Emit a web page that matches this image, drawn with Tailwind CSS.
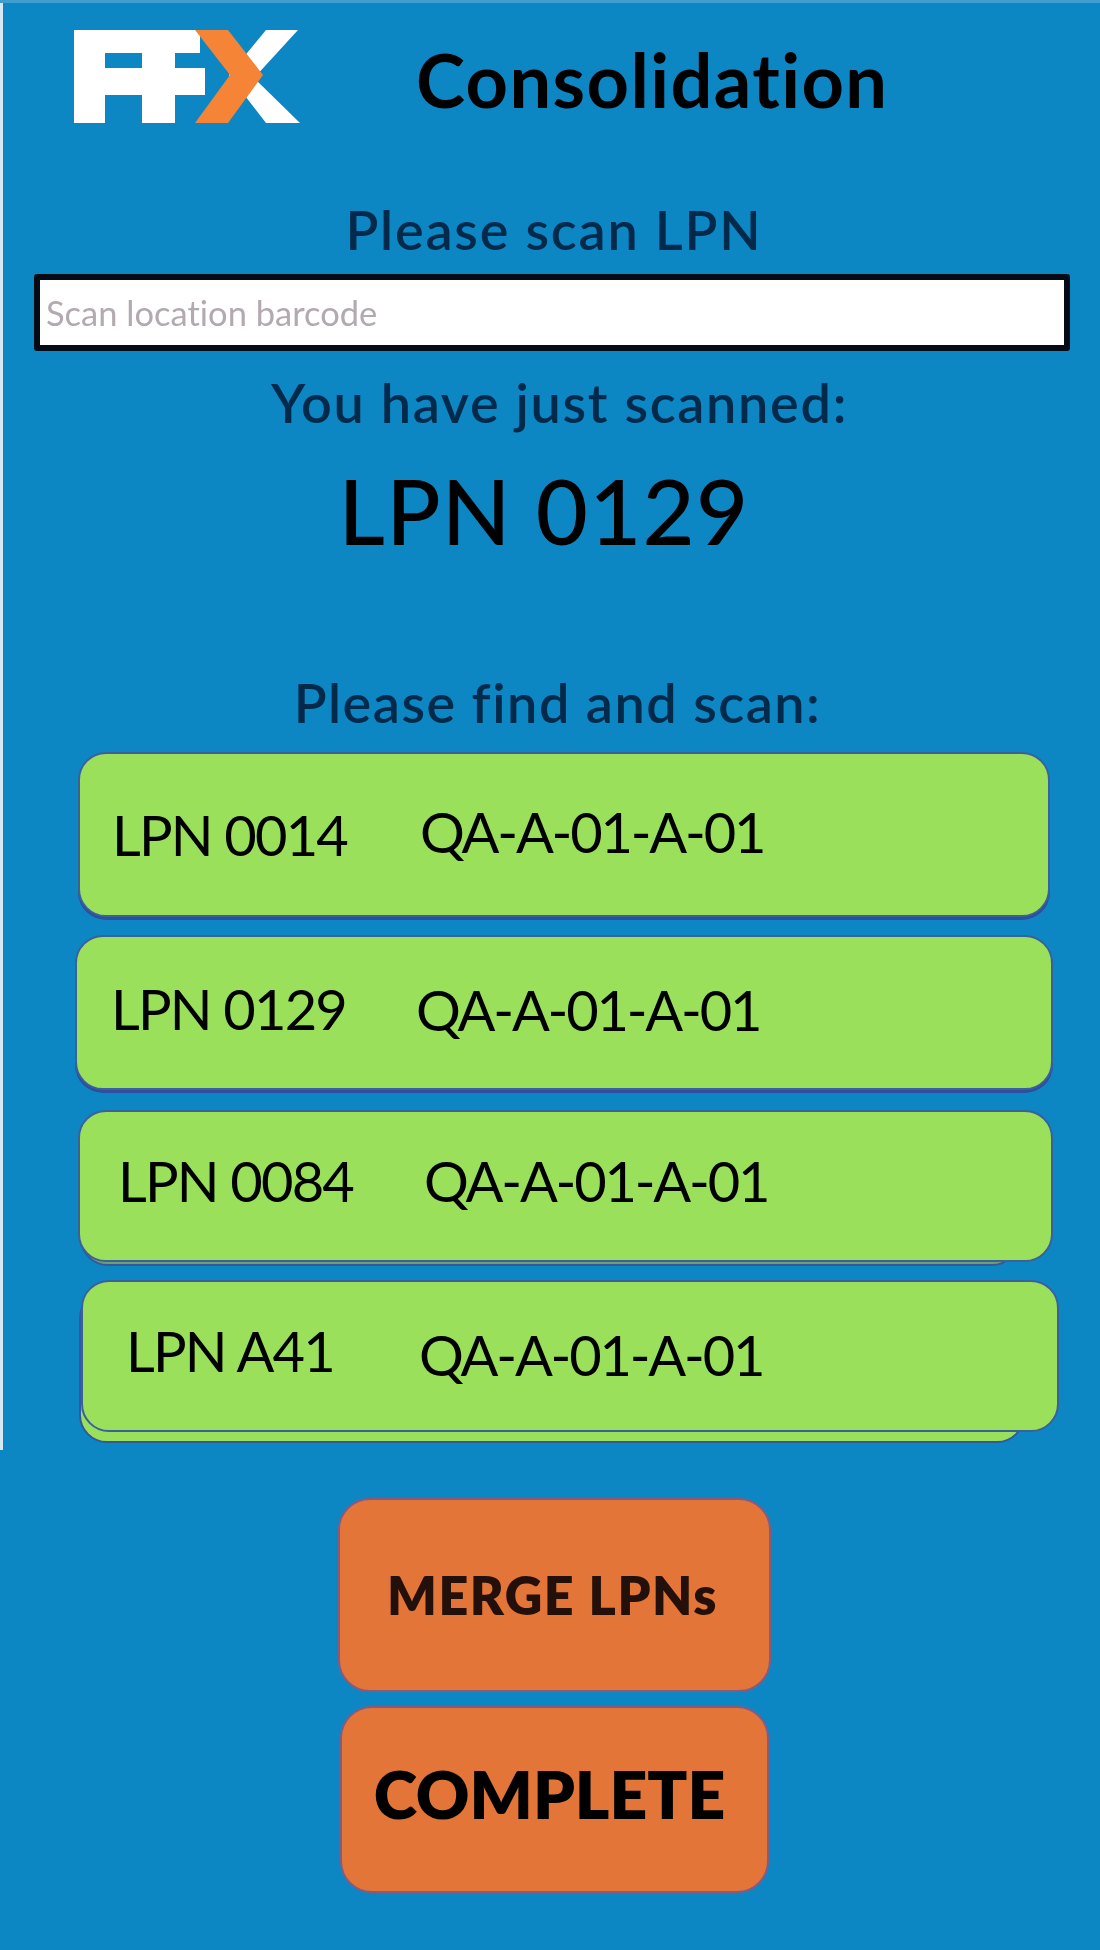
<!DOCTYPE html>
<html lang="en">
<head>
  <meta charset="UTF-8" />
  <title>Consolidation</title>
  <meta name="viewport" content="width=device-width, initial-scale=1.0" />
  <script src="https://cdn.jsdelivr.net/npm/@tailwindcss/browser@4"></script>
</head>
<body class="bg-[#0c87c4] font-['Lato','Open_Sans',sans-serif] [font-variant-ligatures:none] text-black">
  <div class="relative w-[1100px] h-[1950px] overflow-hidden border-t-[3px] border-[#3f9dd0]">
    <!-- white strip down the left edge -->
    <div class="absolute left-0 top-0 w-[3px] h-[1447px] bg-[#d5e8f3]"></div>

    <!-- header -->
    <header class="flex items-center h-[161px] pl-[74px]">
      <svg class="w-[226px] h-[93px] mb-[14px] shrink-0 blur-[0.7px]" viewBox="0 0 226 93">
        <path fill="#fff" d="M0 0H126V23H101V38H131V65H101V93H68V65H31V93H0V38H0Z M31 23V38H68V23Z" fill-rule="evenodd"/>
        <path fill="#fff" d="M155 45L192 0H224L180 48L226 93H192Z"/>
        <path fill="#f58436" d="M121 0H154L189 45L154 93H121L156 45Z"/>
      </svg>
      <h1 class="ml-[116px] mb-[8px] text-[74px] tracking-[1.4px] leading-none font-bold blur-[0.6px]">Consolidation</h1>
    </header>

    <main>
      <p class="mt-[36px] h-[60px] leading-[60px] text-center text-[54px] tracking-[1.8px] font-semibold text-[#032a4a] blur-[0.7px] pl-[8px]">Please scan LPN</p>
      <div class="mt-[14px] ml-[34px] w-[1036px] h-[77px] border-[6px] border-[#050b14] bg-white rounded-[3px] blur-[0.6px]">
        <input class="w-full h-full pl-[6px] text-[34.5px] outline-none placeholder:text-[#b3a9b0]" placeholder="Scan location barcode" />
      </div>
      <p class="mt-[22px] h-[60px] leading-[60px] text-center text-[54px] tracking-[1.7px] font-semibold text-[#032a4a] blur-[0.7px] pl-[19px]">You have just scanned:</p>
      <p class="mt-[27px] h-[100px] leading-[100px] text-center text-[90px] tracking-[1.2px] font-medium blur-[0.6px] pr-[12px]">LPN 0129</p>
      <p class="mt-[113px] h-[60px] leading-[60px] text-center text-[54px] tracking-[1.5px] font-semibold text-[#032a4a] blur-[0.7px] pl-[15px]">Please find and scan:</p>

      <!-- list of LPNs -->
      <div class="mt-[19px] flex flex-col">
        <div class="ml-[78px] w-[972px] h-[165px] flex items-center pl-[32px] rounded-[28px] bg-[#9ae05a] border-2 border-[#3c5f9e] shadow-[0_3px_0_#2e4f9e] text-[56px] tracking-[-2.2px] blur-[0.5px]">
          <span class="w-[308px] tracking-[-1.8px]">LPN 0014</span><span class="pb-[6px]">QA-A-01-A-01</span>
        </div>
        <div class="mt-[18px] ml-[75px] w-[978px] h-[155px] flex items-center pl-[34px] pb-[5px] rounded-[28px] bg-[#9ae05a] border-2 border-[#3c5f9e] shadow-[0_3px_0_#2e4f9e] text-[56px] tracking-[-2.2px] blur-[0.5px]">
          <span class="w-[305px] pb-[3px] tracking-[-1.8px]">LPN 0129</span><span>QA-A-01-A-01</span>
        </div>
        <div class="relative mt-[20px] ml-[78px] w-[975px] h-[152px] blur-[0.5px]">
          <div class="absolute left-[2px] top-[12px] w-[940px] h-[144px] rounded-[28px] bg-[#6f9f6a] border-2 border-[#34589e]"></div>
          <div class="relative h-full flex items-center pl-[38px] pb-[11px] rounded-[28px] bg-[#9ae05a] border-2 border-[#3c5f9e] text-[56px] tracking-[-2.2px]">
            <span class="w-[306px] tracking-[-1.8px]">LPN 0084</span><span>QA-A-01-A-01</span>
          </div>
        </div>
        <div class="relative mt-[18px] ml-[81px] w-[978px] h-[152px] blur-[0.5px]">
          <div class="absolute left-[-2px] top-[10px] w-[946px] h-[153px] rounded-[28px] bg-[#9ae05a] border-2 border-[#34589e]"></div>
          <div class="relative h-full flex items-center pl-[43px] rounded-[28px] bg-[#9ae05a] border-2 border-[#3c5f9e] text-[56px] tracking-[-2.2px]">
            <span class="w-[293px] pb-[10px] tracking-[-1.8px]">LPN A41</span><span class="pb-[3px]">QA-A-01-A-01</span>
          </div>
        </div>
      </div>

      <!-- actions -->
      <button class="block mt-[66px] ml-[338px] w-[433px] h-[194px] pr-[4px] rounded-[32px] bg-[#e27537] border-2 border-[#8a5a7c] text-[52px] tracking-[1.5px] font-extrabold text-[#24100a] blur-[0.4px]">MERGE LPNs</button>
      <button class="block mt-[14px] ml-[340px] w-[429px] h-[187px] pb-[12px] pr-[10px] rounded-[32px] bg-[#e27537] border-2 border-[#8a5a7c] text-[66px] font-extrabold blur-[0.4px]">COMPLETE</button>
    </main>
  </div>
</body>
</html>
